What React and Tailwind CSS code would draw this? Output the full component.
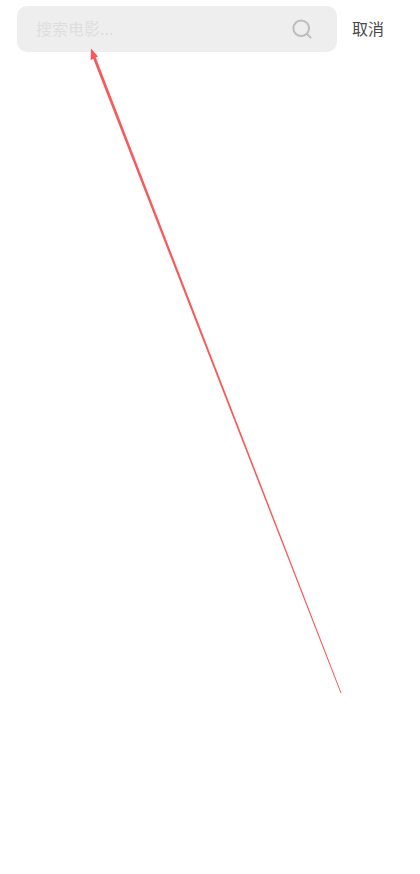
export default function App() {
  return (
    <div className="relative min-h-[874px] bg-white overflow-hidden font-['Noto_Sans_CJK_SC',sans-serif]">
      {/* search bar */}
      <div className="flex items-center pt-1.5 pl-[17px]">
        <div className="flex items-center justify-between w-80 h-[46px] rounded-[10px] bg-[#eeeeee] pl-[19px] pr-[25px]">
          <span className="text-base text-[#dedede] -translate-y-px">搜索电影...</span>
          <svg width="20" height="20" viewBox="0 0 20 20" fill="none" stroke="#bdbdbd" strokeWidth="2" strokeLinecap="round">
            <circle cx="9.2" cy="9.2" r="7.8" />
            <path d="M15 15l3.6 3.6" />
          </svg>
        </div>
        <span className="ml-[15px] text-base text-[#484848] -translate-y-px">取消</span>
      </div>

      {/* red arrow drawn over the page */}
      <svg className="absolute inset-0 pointer-events-none" width="420" height="874" viewBox="0 0 420 874" fill="#f85a5a">
        <path d="M91 48.5L98 56.5L95.8 57.6L341.4 692.8L340.6 693.2L93.2 58.8L90.6 60.2Z" />
      </svg>
    </div>
  );
}
